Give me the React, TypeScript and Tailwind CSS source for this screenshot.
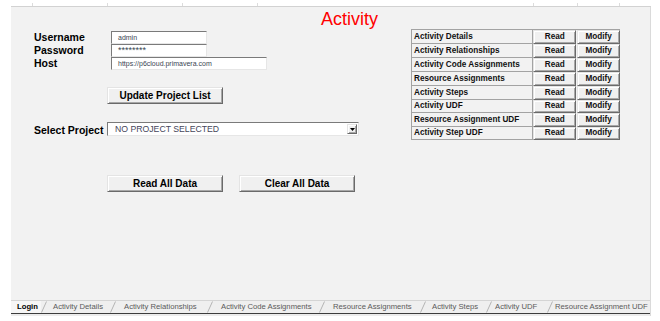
const tableRows = [
  'Activity Details',
  'Activity Relationships',
  'Activity Code Assignments',
  'Resource Assignments',
  'Activity Steps',
  'Activity UDF',
  'Resource Assignment UDF',
  'Activity Step UDF',
];

const sheetTabs = [
  { label: 'Activity Details', w: 'w-[63px]', pl: 'pl-[6px]' },
  { label: 'Activity Relationships', w: 'w-[91px]', pl: 'pl-[8px]' },
  { label: 'Activity Code Assignments', w: 'w-[106px]', pl: 'pl-[8px]' },
  { label: 'Resource Assignments', w: 'w-[95px]', pl: 'pl-[8px]' },
  { label: 'Activity Steps', w: 'w-[60px]', pl: 'pl-[6px]' },
  { label: 'Activity UDF', w: 'w-[55px]', pl: 'pl-[3px]' },
  { label: 'Resource Assignment UDF', w: 'w-[97px]', pl: 'pl-[2px]' },
];

const raised =
  'bg-[#f0f0f0] border border-t-[#e4e4e4] border-l-[#e4e4e4] border-r-[#6a6a6a] border-b-[#6a6a6a] shadow-[inset_1px_1px_0_#ffffff,inset_-1px_-1px_0_#a8a8a8]';

const sunken =
  'bg-white border border-t-[#7a7a7a] border-l-[#7a7a7a] border-r-[#e6e6e6] border-b-[#e6e6e6]';

function Slash() {
  return (
    <svg width="6" height="12" viewBox="0 0 6 12" className="shrink-0">
      <line x1="0.5" y1="11.5" x2="5.5" y2="0.5" stroke="#b4b4b4" strokeWidth="1" />
    </svg>
  );
}

function Field({ label, value, width, size }: { label: string; value: string; width: string; size: string }) {
  return (
    <div className="flex h-[13px] items-center">
      <span className="w-[77px] text-[10.5px] font-bold leading-none text-black">{label}</span>
      <div className={`${sunken} ${width} flex h-[13px] items-center pl-[6px]`}>
        <span className={`${size} leading-none text-[#3a4452]`}>{value}</span>
      </div>
    </div>
  );
}

export default function App() {
  return (
    <div className="h-[321px] w-[660px] overflow-hidden bg-white font-['Liberation_Sans',Arial,sans-serif]">
      {/* column boundaries above the sheet */}
      <svg width="660" height="7" className="block">
        {[32, 107, 182, 257, 533, 577, 619].map((x) => (
          <line key={x} x1={x + 0.5} y1="3" x2={x + 0.5} y2="7" stroke="#dcdcdc" />
        ))}
        <line x1="11" y1="6.5" x2="651" y2="6.5" stroke="#d2d2d2" />
      </svg>

      <div className="ml-[11px] flex h-[309px] w-[640px] flex-col border-r border-[#dadada] bg-[#f2f2f2]">
        {/* Title */}
        <div className="h-[22px] pl-[310px] text-[18px] leading-[24px] text-[#ff0000]">Activity</div>

        <div className="flex flex-1 items-start">
          {/* Login form */}
          <div className="w-[400px] pl-[23px] pt-[2px]">
            <Field label="Username" value="admin" width="w-[96px]" size="text-[7px]" />
            <Field label="Password" value="********" width="w-[96px]" size="text-[9px]" />
            <Field label="Host" value="https://p6cloud.primavera.com" width="w-[156px]" size="text-[7px]" />

            <div className="ml-[73px] mt-[17px] flex">
              <button className={`${raised} h-[17px] w-[116px] text-[10px] font-bold leading-none text-black`}>
                Update Project List
              </button>
            </div>

            <div className="mt-[18px] flex items-end">
              <span className="w-[73px] text-[10.5px] font-bold leading-[12px] text-black">Select Project</span>
              <div className={`${sunken} flex h-[14px] w-[252px] items-center justify-between pl-[7px] pr-[1px]`}>
                <span className="text-[8.7px] leading-none text-[#45455a]">NO PROJECT SELECTED</span>
                <div className={`${raised} flex h-[10px] w-[10px] items-center justify-center`}>
                  <svg width="5" height="3" viewBox="0 0 5 3">
                    <path d="M0 0h5L2.5 3z" fill="#000" />
                  </svg>
                </div>
              </div>
            </div>

            <div className="ml-[73px] mt-[39px] flex gap-[16px]">
              <button className={`${raised} h-[17px] w-[116px] text-[10px] font-bold leading-none text-black`}>
                Read All Data
              </button>
              <button className={`${raised} h-[17px] w-[116px] text-[10px] font-bold leading-none text-black`}>
                Clear All Data
              </button>
            </div>
          </div>

          {/* Data table */}
          <div className="w-[209px] border-l border-t border-[#a3a3a3]">
            {tableRows.map((name, i) => (
              <div key={name} className={`flex ${i < 4 ? 'h-[14px]' : 'h-[13.5px]'}`}>
                <div className="flex w-[122px] items-center border-b border-r border-[#a3a3a3] pl-[2px] pt-px text-[8.2px] font-bold leading-none text-[#111]">
                  {name}
                </div>
                <button className={`${raised} w-[43px] text-[8.2px] font-bold leading-none text-[#111]`}>Read</button>
                <button className={`${raised} ml-px w-[43px] text-[8.2px] font-bold leading-none text-[#111]`}>Modify</button>
              </div>
            ))}
          </div>
        </div>

        {/* Sheet tabs */}
        <div className="flex h-[13px] items-center border-t border-[#d4d4d4] bg-[#efefef] text-[7.7px] leading-none text-[#5a5a5a]">
          <div className="flex h-full w-[30px] items-center bg-[#f6f6f6] pl-[6px] font-bold text-black">Login</div>
          {sheetTabs.map((t) => (
            <div key={t.label} className="flex h-full items-center">
              <Slash />
              <div className={`${t.w} ${t.pl} whitespace-nowrap`}>{t.label}</div>
            </div>
          ))}
        </div>
        <div className="h-[1px] bg-[#3c3c3c]" />
        <div className="h-[2px] bg-[#ececec]" />
      </div>
    </div>
  );
}
